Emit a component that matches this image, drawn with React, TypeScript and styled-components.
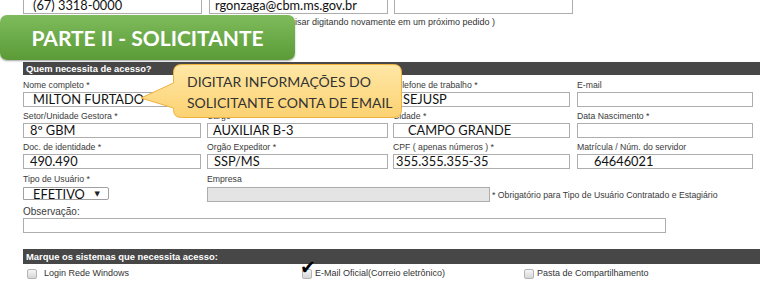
import styled, {createGlobalStyle} from "styled-components";

const GlobalStyle = createGlobalStyle`
  html, body {
    margin: 0;
    padding: 0;
    background: #fff;
  }
  body {
    font-family: "Liberation Sans", Arial, sans-serif;
  }
`

const Page = styled.div`
  position: relative;
  width: 763px;
  height: 295px;
  padding: 0 3px 0 23px;
  box-sizing: border-box;
  overflow: hidden;
`

const TopRow = styled.div`
  display: grid;
  grid-template-columns: 186px 185px 180px;
  margin-top: -2px;
`

const Field = styled.div<{$w?: number; $h?: number; $indent?: number; $disabled?: boolean}>`
  width: ${p => p.$w ?? 178}px;
  height: ${p => p.$h ?? 15}px;
  box-sizing: border-box;
  border: 1px solid #adadad;
  padding-left: ${p => p.$indent ?? 6}px;
  background: ${p => p.$disabled ? "#e4e4e4" : "#fff"};
  font: 12.8px/12px Lato, "Open Sans", sans-serif;
  color: #111;
  white-space: nowrap;
`

const Note = styled.div`
  width: 472px;
  margin-top: 2px;
  font-size: 9px;
  line-height: 12px;
  color: #333;
  text-align: right;
  white-space: nowrap;
  overflow: hidden;
`

const SectionBar = styled.div<{$h: number}>`
  height: ${p => p.$h}px;
  padding-left: 3px;
  background: #474747;
  color: #fff;
  font-weight: 700;
  font-size: 9.4px;
  line-height: ${p => p.$h}px;
`

const FieldGrid = styled.div`
  display: grid;
  grid-template-columns: 184px 186px 184px 1fr;
  row-gap: 3px;
  margin-top: 4px;
`

const Label = styled.div<{$size?: number}>`
  height: 13px;
  font-size: ${p => p.$size ?? 8.7}px;
  line-height: 13px;
  color: #3a3a3a;
  white-space: nowrap;
`

const TypeRow = styled.div`
  display: flex;
  align-items: flex-start;
  margin-top: 4px;
`

const TypeCol = styled.div<{$w: number}>`
  width: ${p => p.$w}px;
`

const Select = styled.div`
  display: flex;
  align-items: center;
  justify-content: space-between;
  width: 86px;
  height: 13px;
  margin-top: 1px;
  box-sizing: border-box;
  border: 1px solid #a0a0a0;
  border-radius: 0 2px 2px 0;
  padding: 0 8px 0 9px;
  font: 12.8px/12px Lato, "Open Sans", sans-serif;
  color: #111;
`

const Caret = styled.span`
  font-family: "DejaVu Sans", sans-serif;
  font-size: 7px;
  color: #222;
`

const InlineFields = styled.div`
  display: flex;
  align-items: center;
  gap: 2px;
  margin-top: 1px;
`

const Hint = styled.span`
  font-size: 8.7px;
  color: #3a3a3a;
  white-space: nowrap;
`

const ObsBlock = styled.div`
  margin-top: 3px;
`

const CheckRow = styled.div`
  display: grid;
  grid-template-columns: 275px 222px 1fr;
  align-items: center;
  margin-top: 4px;
  padding-left: 4px;
`

const CheckItem = styled.div<{$gap: number}>`
  position: relative;
  display: flex;
  align-items: center;
  gap: ${p => p.$gap}px;
  font-size: 9px;
  line-height: 11px;
  color: #333;
`

const CheckBox = styled.span`
  width: 8px;
  height: 8px;
  border: 1px solid #b4b4b4;
  border-radius: 2px;
  background: linear-gradient(#f6f6f6, #d6d6d6);
  flex: none;
`

const Tick = styled.span`
  position: absolute;
  left: -2px;
  top: -10px;
  font-family: "DejaVu Sans", sans-serif;
  font-size: 19px;
  line-height: 19px;
  color: #000;
`

const Banner = styled.div`
  position: absolute;
  left: 0;
  top: 15px;
  width: 295px;
  height: 45px;
  border-radius: 7px;
  background: linear-gradient(#7ebb5c, #5b9b37);
  box-shadow: 0 1px 2px rgba(0, 0, 0, 0.35);
  color: #fff;
  font: 700 21px/45px Lato, "Open Sans", sans-serif;
  text-align: center;
`

const Callout = styled.div`
  position: absolute;
  left: 140px;
  top: 64px;
  width: 263px;
  height: 55px;
`

const CalloutShape = styled.svg`
  position: absolute;
  left: 0;
  top: 0;
  overflow: visible;
`

const CalloutText = styled.div`
  position: relative;
  padding: 8px 0 0 47px;
  font: 14px/20.5px Lato, "Open Sans", sans-serif;
  color: #333;
  white-space: nowrap;
`

const rows = [
    [
        {label: "Nome completo *", value: "MILTON FURTADO", indent: 9, w: 178},
        {label: "Posto/Graduação *", value: "", indent: 5, w: 181},
        {label: "Telefone de trabalho *", value: "SEJUSP", indent: 9, w: 177},
        {label: "E-mail", value: "", indent: 6, w: 176},
    ],
    [
        {label: "Setor/Unidade Gestora *", value: "8º GBM", indent: 6, w: 178},
        {label: "Cargo *", value: "AUXILIAR B-3", indent: 5, w: 181},
        {label: "Cidade *", value: "CAMPO GRANDE", indent: 14, w: 177},
        {label: "Data Nascimento *", value: "", indent: 6, w: 176},
    ],
    [
        {label: "Doc. de identidade *", value: "490.490", indent: 6, w: 178},
        {label: "Orgão Expeditor *", value: "SSP/MS", indent: 6, w: 181},
        {label: "CPF ( apenas números ) *", value: "355.355.355-35", indent: 2, w: 177},
        {label: "Matrícula / Núm. do servidor", value: "64646021", indent: 16, w: 176},
    ],
]

function App() {
    return (
        <Page>
            <GlobalStyle/>
            <TopRow>
                <Field $h={16} $w={179} $indent={9}>(67) 3318-0000</Field>
                <Field $h={16} $w={179} $indent={5}>rgonzaga@cbm.ms.gov.br</Field>
                <Field $h={16} $w={179}/>
            </TopRow>
            <Note>( Os dados ficarão gravados para não precisar digitando novamente em um próximo pedido )</Note>

            <SectionBar $h={13} style={{marginTop: 34}}>Quem necessita de acesso?</SectionBar>
            <FieldGrid>
                {rows.flat().map(f =>
                    <div key={f.label}>
                        <Label>{f.label}</Label>
                        <Field $w={f.w} $indent={f.indent}>{f.value}</Field>
                    </div>
                )}
            </FieldGrid>

            <TypeRow>
                <TypeCol $w={184}>
                    <Label>Tipo de Usuário *</Label>
                    <Select>EFETIVO <Caret>▼</Caret></Select>
                </TypeCol>
                <div>
                    <Label>Empresa</Label>
                    <InlineFields>
                        <Field $w={283} $disabled/>
                        <Hint>* Obrigatório para Tipo de Usuário Contratado e Estagiário</Hint>
                    </InlineFields>
                </div>
            </TypeRow>

            <ObsBlock>
                <Label $size={10}>Observação:</Label>
                <Field $w={643}/>
            </ObsBlock>

            <SectionBar $h={15} style={{marginTop: 16}}>Marque os sistemas que necessita acesso:</SectionBar>
            <CheckRow>
                <CheckItem $gap={7}><CheckBox/>Login Rede Windows</CheckItem>
                <CheckItem $gap={3}><CheckBox/><Tick>✔</Tick>E-Mail Oficial(Correio eletrônico)</CheckItem>
                <CheckItem $gap={3}><CheckBox/>Pasta de Compartilhamento</CheckItem>
            </CheckRow>

            <Banner>PARTE II - SOLICITANTE</Banner>

            <Callout>
                <CalloutShape width="263" height="55" viewBox="0 0 263 55">
                    <defs>
                        <linearGradient id="calloutFill" x1="0" y1="0" x2="0" y2="1">
                            <stop offset="0" stopColor="#fee7a6"/>
                            <stop offset="1" stopColor="#fcd272"/>
                        </linearGradient>
                    </defs>
                    <path
                        d="M41.5 0.5 H253.5 Q261.5 0.5 261.5 8.5 V45.5 Q261.5 53.5 253.5 53.5 H41.5 Q33.5 53.5 33.5 45.5 V44 L1 34 L33.5 19 V8.5 Q33.5 0.5 41.5 0.5 Z"
                        fill="url(#calloutFill)"
                        stroke="#efb23e"
                        strokeWidth="1"
                    />
                </CalloutShape>
                <CalloutText>
                    DIGITAR INFORMAÇÕES DO<br/>
                    SOLICITANTE CONTA DE EMAIL
                </CalloutText>
            </Callout>
        </Page>
    )
}

export default App
